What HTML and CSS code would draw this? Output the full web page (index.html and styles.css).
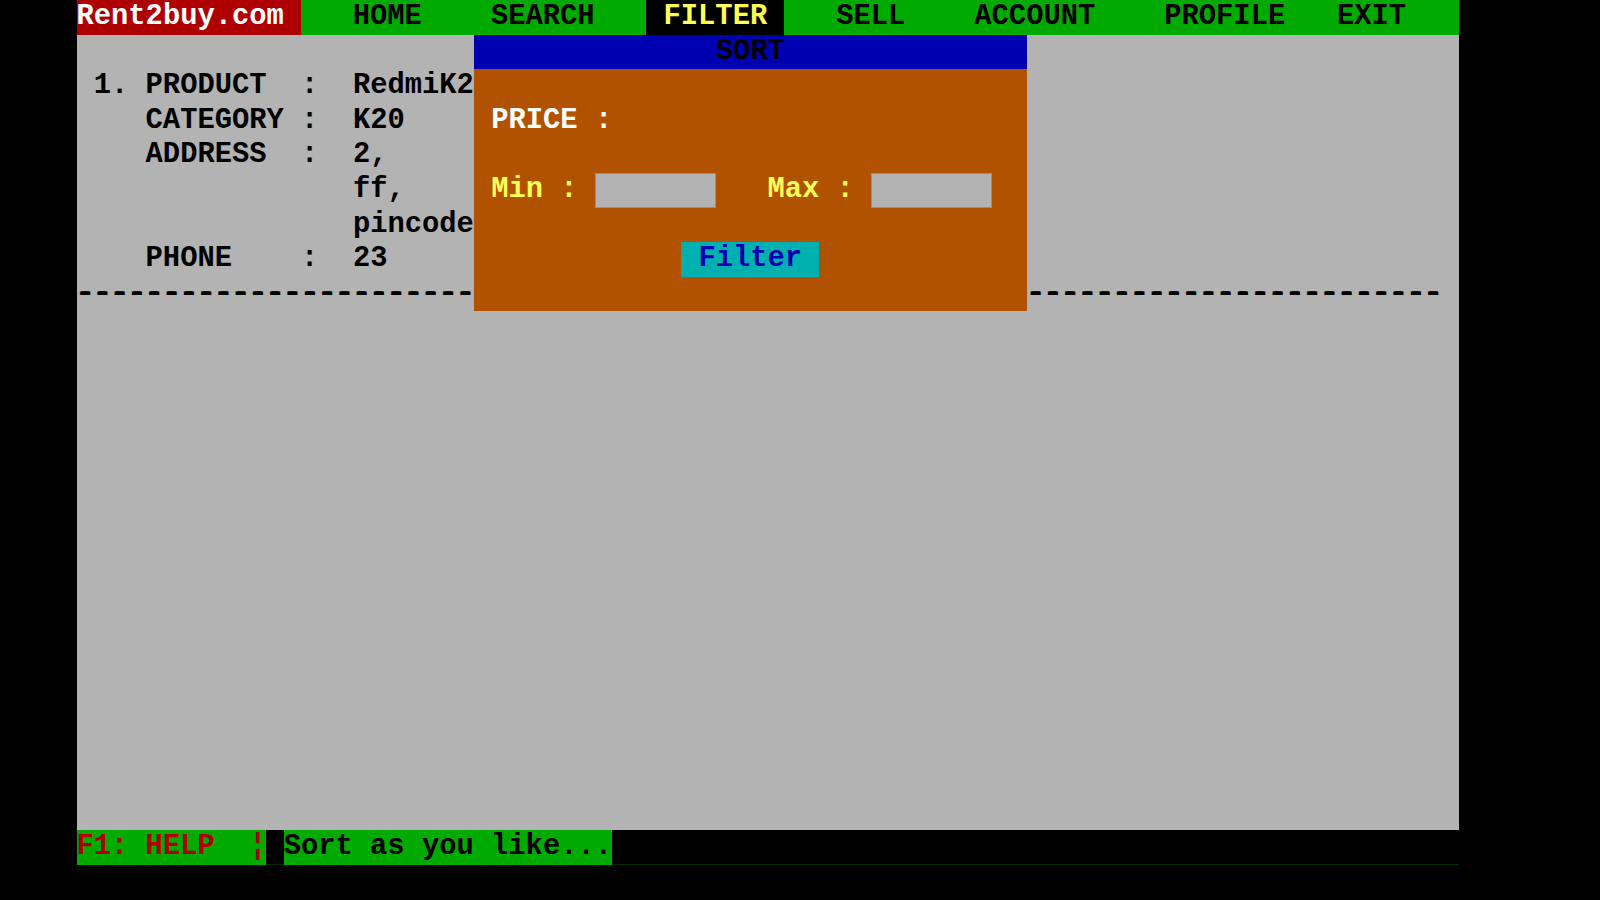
FILE: index.html
```html
<!DOCTYPE html>
<html lang="en">
<head>
<meta charset="utf-8">
<title>Rent2buy.com - Filter</title>
<link rel="stylesheet" href="styles.css">
</head>
<body>
<div class="screen">
  <nav class="menubar">
    <span class="logo">Rent2buy.com</span>
    <span class="item home">HOME</span>
    <span class="item search">SEARCH</span>
    <span class="item filter">FILTER</span>
    <span class="item sell">SELL</span>
    <span class="item account">ACCOUNT</span>
    <span class="item profile">PROFILE</span>
    <span class="item exit">EXIT</span>
  </nav>

  <main class="desk">
    <div class="record">
      <span>1.</span><span>PRODUCT</span><span>:</span><span>RedmiK2</span>
      <span></span><span>CATEGORY</span><span>:</span><span>K20</span>
      <span></span><span>ADDRESS</span><span>:</span><span>2,</span>
      <span class="value">ff,</span>
      <span class="value">pincode</span>
      <span></span><span>PHONE</span><span>:</span><span>23</span>
    </div>
    <div class="rule">-------------------------------------------------------------------------------</div>
  </main>

  <footer class="statusbar">
    <span class="help">F1: HELP  ¦</span>
    <span class="hint">Sort as you like...</span>
  </footer>

  <section class="popup">
    <div class="popup-title">SORT</div>
    <div class="popup-body">
      <span class="price-label">PRICE :</span>
      <span class="min-label">Min :</span>
      <input class="field min-field" type="text" aria-label="Min">
      <span class="max-label">Max :</span>
      <input class="field max-field" type="text" aria-label="Max">
      <button class="filter-btn" type="button">Filter</button>
    </div>
  </section>
</div>
</body>
</html>
```

FILE: styles.css
```css
:root {
  --cw: 17.28px;
  --rh: 34.6px;
  --green: #00aa00;
  --gray: #b3b3b3;
  --red: #ae0000;
  --brown: #b05200;
  --blue: #0000b0;
  --cyan: #00b0b0;
  --yellow: #ffff55;
}

* { box-sizing: border-box; }

body {
  margin: 0;
  background: #000;
  font-family: "Liberation Mono", "DejaVu Sans Mono", monospace;
  font-weight: bold;
  font-size: 28.8px;
  line-height: var(--rh);
  color: #000;
}

.screen {
  position: relative;
  width: calc(var(--cw) * 80);
  margin-left: 76.5px;
}

.menubar {
  display: grid;
  grid-template-columns: repeat(80, var(--cw));
  height: var(--rh);
  background: var(--green);
  white-space: pre;
}

.menubar span { grid-row: 1; }

.logo { grid-column: 1 / span 13; background: var(--red); color: #fff; }
.home { grid-column: 17 / span 4; }
.search { grid-column: 25 / span 6; }
.filter {
  grid-column: 34 / span 8;
  background: #000;
  color: var(--yellow);
  padding-left: var(--cw);
}
.sell { grid-column: 45 / span 4; }
.account { grid-column: 53 / span 7; }
.profile { grid-column: 64 / span 7; }
.exit { grid-column: 74 / span 4; }

.desk {
  height: calc(var(--rh) * 23);
  background: var(--gray);
  padding-top: var(--rh);
}

.record {
  display: grid;
  grid-template-columns: calc(var(--cw) * 3) calc(var(--cw) * 9) calc(var(--cw) * 3) auto;
  grid-auto-rows: var(--rh);
  padding-left: var(--cw);
  white-space: pre;
}

.record .value { grid-column: 4; }

.rule {
  height: var(--rh);
  white-space: pre;
  overflow: hidden;
  text-shadow: 1px 0 0 #000, -1px 0 0 #000;
}

.statusbar {
  display: grid;
  grid-template-columns: repeat(80, var(--cw));
  height: var(--rh);
  background: #000;
  white-space: pre;
  border-bottom: 1px solid #002a00;
}

.help { grid-column: 1 / span 11; background: var(--green); color: var(--red); }
.hint { grid-column: 13 / span 19; background: var(--green); color: #000; }

.popup {
  position: absolute;
  left: calc(var(--cw) * 23);
  top: var(--rh);
  width: calc(var(--cw) * 32);
}

.popup-title {
  height: var(--rh);
  background: var(--blue);
  color: #000;
  text-align: center;
}

.popup-body {
  display: grid;
  grid-template-columns: repeat(32, var(--cw));
  grid-template-rows: repeat(7, var(--rh));
  background: var(--brown);
  white-space: pre;
}

.price-label { grid-column: 2 / span 7; grid-row: 2; color: #fff; }
.min-label { grid-column: 2 / span 5; grid-row: 4; color: var(--yellow); }
.max-label { grid-column: 18 / span 5; grid-row: 4; color: var(--yellow); }

.field {
  grid-row: 4;
  width: 100%;
  height: 100%;
  margin: 0;
  padding: 0;
  border: 1px solid #a08c7c;
  background: var(--gray);
  font: inherit;
  outline: none;
}
.min-field { grid-column: 8 / span 7; }
.max-field { grid-column: 24 / span 7; }

.filter-btn {
  grid-column: 13 / span 8;
  grid-row: 6;
  margin: 0;
  padding: 0 0 0 var(--cw);
  border: 0;
  background: var(--cyan);
  color: var(--blue);
  font: inherit;
  line-height: var(--rh);
  text-align: left;
  white-space: pre;
}
```
